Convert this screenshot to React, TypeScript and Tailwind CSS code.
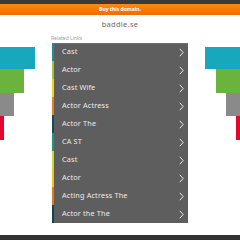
import React from 'react';

const links = [
  { label: 'Cast', color: '#1b8f94' },
  { label: 'Actor', color: '#9cc53c' },
  { label: 'Cast Wife', color: '#f2d21a' },
  { label: 'Actor Actress', color: '#e4801f' },
  { label: 'Actor The', color: '#124b5a' },
  { label: 'CA ST', color: '#1d9584' },
  { label: 'Cast', color: '#c9d83a' },
  { label: 'Actor', color: '#f3c318' },
  { label: 'Acting Actress The', color: '#e57a1d' },
  { label: 'Actor the The', color: '#10455e' },
];

const bars = [
  { w: 'w-[35px]', h: 'h-[22px]', bg: 'bg-[#17a8bd]' },
  { w: 'w-[24px]', h: 'h-[24px]', bg: 'bg-[#6cb33e]' },
  { w: 'w-[14px]', h: 'h-[23px]', bg: 'bg-[#8a8a8a]' },
  { w: 'w-[4px]', h: 'h-[24px]', bg: 'bg-[#e2062c]' },
];

function Chevron() {
  return (
    <svg width="5" height="9" viewBox="0 0 5 9" fill="none">
      <path d="M0.8 0.8 L4.2 4.5 L0.8 8.2" stroke="#e6e6e6" strokeWidth="1" />
    </svg>
  );
}

function Bars({ side }: { side: 'left' | 'right' }) {
  return (
    <div className={`w-[52px] pt-[12px] flex flex-col ${side === 'left' ? 'items-start' : 'items-end'}`}>
      {bars.map((b, i) => (
        <div key={i} className={`${b.w} ${b.h} ${b.bg}`} />
      ))}
    </div>
  );
}

export default function App() {
  return (
    <div className="w-[240px] h-[240px] bg-white flex flex-col overflow-hidden" style={{ fontFamily: '"Noto Sans", "DejaVu Sans", sans-serif' }}>
      <div className="h-[4px] bg-[#3a3a3a]" />
      <div className="h-[11px] bg-gradient-to-b from-[#f98a12] to-[#f06c00] flex items-center justify-center">
        <span className="text-[5px] font-bold text-white leading-none">Buy this domain.</span>
      </div>
      <div className="h-[20px] flex items-center justify-center">
        <span className="text-[7.5px] text-[#6a6a6a] leading-none tracking-[0.3px]">baddie.se</span>
      </div>
      <div className="flex">
        <Bars side="left" />
        <div className="w-[136px]">
          <div className="h-[8px] text-[5px] text-[#a0a0a0] leading-[6px] -ml-[1px]">Related Links</div>
          <div className="bg-[#5e5e5e] border-t border-[#707070]">
            {links.map((l, i) => (
              <div key={i} className="h-[18px] flex items-center" style={{ marginTop: i === 0 ? -1 : 0 }}>
                <div className="w-[2px] h-full" style={{ background: l.color }} />
                <span className="ml-[8px] flex-1 text-[7.3px] text-[#ececec] leading-none tracking-[0.15px]">{l.label}</span>
                <div className="mr-[4px] flex items-center">
                  <Chevron />
                </div>
              </div>
            ))}
          </div>
        </div>
        <Bars side="right" />
      </div>
      <div className="flex-1" />
      <div className="h-[5px] bg-[#333]" />
    </div>
  );
}
